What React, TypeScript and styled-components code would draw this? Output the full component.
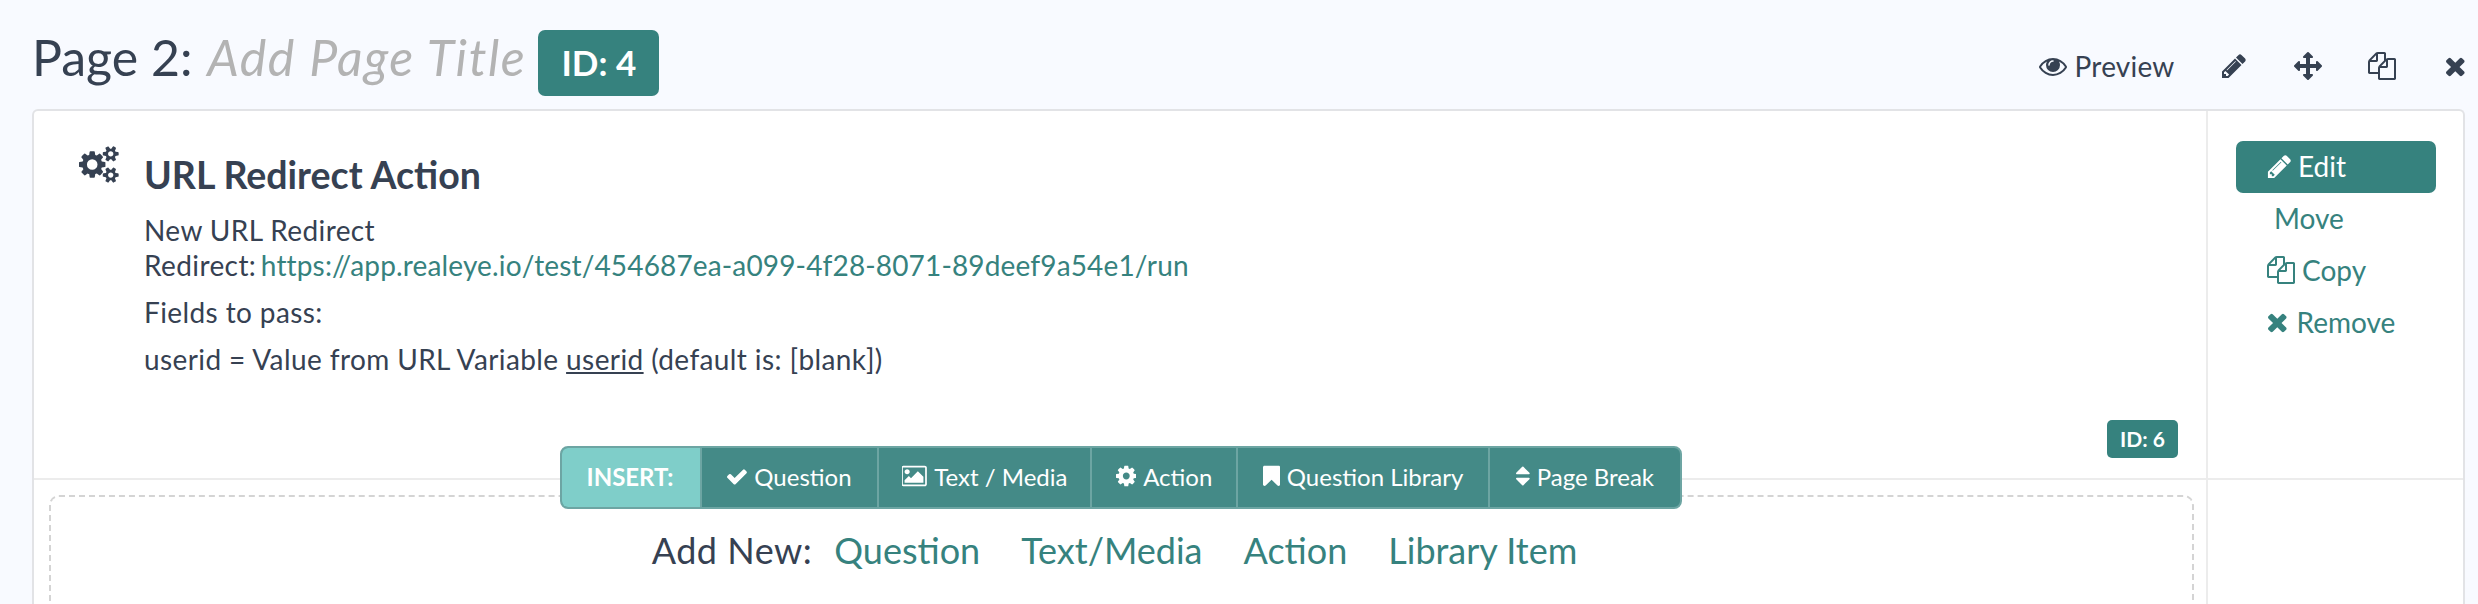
import React from "react";

import styled, { createGlobalStyle } from "styled-components";

const TEAL = "#36827e";
const INK = "#364152";

// Font Awesome 4 glyph shapes, all on the 1792 grid
const paths = {
  pencil:
    "M491 1536l91-91-235-235-91 91v107h128v128h107zm523-928q0-22-22-22-10 0-17 7l-542 542q-7 7-7 17 0 22 22 22 10 0 17-7l542-542q7-7 7-17zm-54-192l416 416-832 832h-416v-416zm683 96q0 53-37 90l-166 166-416-416 166-165q36-38 90-38 53 0 91 38l235 234q37 39 37 91z",
  files:
    "M1696 384q40 0 68 28t28 68v1216q0 40-28 68t-68 28h-960q-40 0-68-28t-28-68v-288h-544q-40 0-68-28t-28-68v-672q0-40 20-88t48-76l408-408q28-28 76-48t88-20h416q40 0 68 28t28 68v328q68-40 128-40h416zm-544 213l-299 299h299v-299zm-640-384l-299 299h299v-299zm196 647l316-316v-416h-384v416q0 40-28 68t-68 28h-416v640h512v-256q0-40 20-88t48-76zm956 804v-1152h-384v416q0 40-28 68t-68 28h-416v640h896z",
  times:
    "M1490 1322q0 40-28 68l-136 136q-28 28-68 28t-68-28l-294-294-294 294q-28 28-68 28t-68-28l-136-136q-28-28-28-68t28-68l294-294-294-294q-28-28-28-68t28-68l136-136q28-28 68-28t68 28l294 294 294-294q28-28 68-28t68 28l136 136q28 28 28 68t-28 68l-294 294 294 294q28 28 28 68z",
  eye: "M1664 960q-152-236-381-353 61 104 61 225 0 185-131.500 316.500t-316.500 131.500-316.500-131.500-131.500-316.500q0-121 61-225-229 117-381 353 133 205 333.500 326.500t434.500 121.500 434.500-121.500 333.500-326.500zm-720-384q0-20-14-34t-34-14q-125 0-214.500 89.500t-89.500 214.500q0 20 14 34t34 14 34-14 14-34q0-86 61-147t147-61q20 0 34-14t14-34zm848 384q0 34-20 69-140 230-376.500 368.500t-499.500 138.500-499.500-139-376.500-368q-20-35-20-69t20-69q140-229 376.500-368t499.500-139 499.500 139 376.500 368q20 35 20 69z",
  arrows:
    "M1792 896q0 26-19 45l-256 256q-19 19-45 19t-45-19-19-45v-128h-384v384h128q26 0 45 19t19 45-19 45l-256 256q-19 19-45 19t-45-19l-256-256q-19-19-19-45t19-45 45-19h128v-384h-384v128q0 26-19 45t-45 19-45-19l-256-256q-19-19-19-45t19-45l256-256q19-19 45-19t45 19 19 45v128h384v-384h-128q-26 0-45-19t-19-45 19-45l256-256q19-19 45-19t45 19l256 256q19 19 19 45t-19 45-45 19h-128v384h384v-128q0-26 19-45t45-19 45 19l256 256q19 19 19 45z",
  check:
    "M1671 566q0 40-28 68l-724 724-136 136q-28 28-68 28t-68-28l-136-136-362-362q-28-28-28-68t28-68l136-136q28-28 68-28t68 28l294 295 656-657q28-28 68-28t68 28l136 136q28 28 28 68z",
  picture:
    "M576 576q0 80-56 136t-136 56-136-56-56-136 56-136 136-56 136 56 56 136zm1024 384v448h-1408v-192l320-320 160 160 512-512zm96-704h-1600q-13 0-22.500 9.500t-9.500 22.500v1216q0 13 9.500 22.500t22.500 9.500h1600q13 0 22.500-9.500t9.500-22.500v-1216q0-13-9.500-22.500t-22.500-9.500zm160 32v1216q0 66-47 113t-113 47h-1600q-66 0-113-47t-47-113v-1216q0-66 47-113t113-47h1600q66 0 113 47t47 113z",
  cog: "M1152 896q0-106-75-181t-181-75-181 75-75 181 75 181 181 75 181-75 75-181zm512-109v222q0 12-8 23t-20 13l-185 28q-19 54-39 91 35 50 107 138 10 12 10 25t-9 23q-27 37-99 108t-94 71q-12 0-26-9l-138-108q-44 23-91 38-16 136-29 186-7 28-36 28h-222q-14 0-24.500-8.500t-11.500-21.500l-28-184q-49-16-90-37l-141 107q-10 9-25 9-14 0-25-11-126-114-165-168-7-10-7-23 0-12 8-23 15-21 51-66.500t54-70.500q-27-50-41-99l-183-27q-13-2-21-12.500t-8-23.500v-222q0-12 8-23t19-13l186-28q14-46 39-92-40-57-107-138-10-12-10-24 0-10 9-23 26-36 98.500-107.500t94.500-71.500q13 0 26 10l138 107q44-23 91-38 16-136 29-186 7-28 36-28h222q14 0 24.500 8.500t11.500 21.500l28 184q49 16 90 37l142-107q9-9 24-9 13 0 25 10 129 119 165 170 7 8 7 22 0 12-8 23-15 21-51 66.500t-54 70.500q26 50 41 98l183 28q13 2 21 12.500t8 23.500z",
  bookmark:
    "M1420 128q23 0 44 9 33 13 52.500 41t19.500 62v1289q0 34-19.500 62t-52.500 41q-19 8-44 8-48 0-83-32l-441-424-441 424q-36 33-83 33-23 0-44-9-33-13-52.500-41t-19.500-62v-1289q0-34 19.500-62t52.500-41q21-9 44-9h1048z",
  sort: "M1408 1088q0 26-19 45l-448 448q-19 19-45 19t-45-19l-448-448q-19-19-19-45t19-45 45-19h896q26 0 45 19t19 45zm0-384q0 26-19 45t-45 19h-896q-26 0-45-19t-19-45 19-45l448-448q19-19 45-19t45 19l448 448q19 19 19 45z",
  cogs: "M896 896q0-106-75-181t-181-75-181 75-75 181 75 181 181 75 181-75 75-181zm768 512q0-52-38-90t-90-38-90 38-38 90q0 53 37.500 90.500t90.500 37.500 90.500-37.500 37.500-90.500zm0-1024q0-52-38-90t-90-38-90 38-38 90q0 53 37.500 90.500t90.500 37.500 90.500-37.500 37.500-90.500zm-384 421v185q0 10-7 19.500t-16 10.500l-155 24q-11 35-32 76 34 48 90 115 7 11 7 20 0 12-7 19-23 30-82.500 89.500t-78.500 59.500q-11 0-21-7l-115-90q-37 19-77 31-11 108-23 155-7 24-30 24h-186q-11 0-20-7.500t-10-17.500l-23-153q-34-10-75-31l-118 89q-7 7-20 7-11 0-21-8-144-133-144-160 0-9 7-19 10-14 41-53t47-61q-23-44-35-82l-152-24q-10-1-17-9.500t-7-19.500v-185q0-10 7-19.500t16-10.500l155-24q11-35 32-76-34-48-90-115-7-11-7-20 0-12 7-20 22-30 82-89t79-59q11 0 21 7l115 90q34-18 77-32 11-108 23-154 7-24 30-24h186q11 0 20 7.500t10 17.500l23 153q34 10 75 31l118-89q8-7 20-7 11 0 21 8 144 133 144 160 0 8-7 19-12 16-42 54t-45 60q23 48 34 82l152 23q10 2 17 10.500t7 19.500zm640 533v140q0 16-149 31-12 27-30 52 51 113 51 138 0 4-4 7-122 71-124 71-8 0-46-47t-52-68q-20 2-30 2t-30-2q-14 21-52 68t-46 47q-2 0-124-71-4-3-4-7 0-25 51-138-18-25-30-52-149-15-149-31v-140q0-16 149-31 13-29 30-52-51-113-51-138 0-4 4-7 4-2 35-20t59-34 30-16q8 0 46 46.500t52 67.500q20-2 30-2t30 2q51-71 92-112l6-2q4 0 124 70 4 3 4 7 0 25-51 138 17 23 30 52 149 15 149 31zm0-1024v140q0 16-149 31-12 27-30 52 51 113 51 138 0 4-4 7-122 71-124 71-8 0-46-47t-52-68q-20 2-30 2t-30-2q-14 21-52 68t-46 47q-2 0-124-71-4-3-4-7 0-25 51-138-18-25-30-52-149-15-149-31v-140q0-16 149-31 13-29 30-52-51-113-51-138 0-4 4-7 4-2 35-20t59-34 30-16q8 0 46 46.500t52 67.500q20-2 30-2t30 2q51-71 92-112l6-2q4 0 124 70 4 3 4 7 0 25-51 138 17 23 30 52 149 15 149 31z",
};

type IconName = keyof typeof paths;

// x offset and width of each glyph's own box, where it isn't a plain 1792 square
const boxes: Partial<Record<IconName, [number, number]>> = {
  picture: [0, 1920],
  cogs: [0, 1920],
  times: [302, 1188],
  check: [120, 1552],
  bookmark: [256, 1280],
  sort: [384, 1024],
  cog: [128, 1536],
};

const Icon = ({ name, size }: { name: IconName; size: number }) => {
  const [x, w] = boxes[name] ?? [0, 1792];
  return (
    <Glyph
      viewBox={`${x} 0 ${w} 1792`}
      width={(size * w) / 1792}
      height={size}
      fill="currentColor"
    >
      <path d={paths[name]} />
    </Glyph>
  );
};

export default function App() {
  return (
    <>
      <GlobalStyle />
      <Root>
        <Header>
          <Title>
            Page 2: <Placeholder>Add Page Title</Placeholder>
            <PageBadge>ID: 4</PageBadge>
          </Title>
          <PageTools>
            <PreviewLink>
              <Icon name="eye" size={28} /> Preview
            </PreviewLink>
            <ToolIcon>
              <Icon name="pencil" size={28} />
            </ToolIcon>
            <ToolIcon>
              <Icon name="arrows" size={28} />
            </ToolIcon>
            <ToolIcon>
              <Icon name="files" size={28} />
            </ToolIcon>
            <CloseIcon>
              <Icon name="times" size={28} />
            </CloseIcon>
          </PageTools>
        </Header>

        <Card>
          <ActionCell>
            <GearSlot>
              <Icon name="cogs" size={37} />
            </GearSlot>
            <ActionBody>
              <ActionTitle>URL Redirect Action</ActionTitle>
              <BodyText>
                New URL Redirect
                <br />
                Redirect:{" "}
                <TealLink>
                  https://app.realeye.io/test/454687ea-a099-4f28-8071-89deef9a54e1/run
                </TealLink>
              </BodyText>
              <BodyText>Fields to pass:</BodyText>
              <BodyText>
                userid = Value from URL Variable <u>userid</u> (default is: [blank])
              </BodyText>
            </ActionBody>
            <ItemBadge>ID: 6</ItemBadge>
          </ActionCell>

          <SideCell>
            <EditButton>
              <Icon name="pencil" size={27} /> Edit
            </EditButton>
            <SideLink $indent={38} $gap={8}>
              Move
            </SideLink>
            <SideLink $indent={31} $gap={7}>
              <Icon name="files" size={28} /> Copy
            </SideLink>
            <SideLink $indent={32} $gap={10}>
              <Icon name="times" size={28} /> Remove
            </SideLink>
          </SideCell>

          <AddCell>
            <DropZone>
              <AddLabel>Add New:</AddLabel>
              <AddLink>Question</AddLink>
              <AddLink>Text/Media</AddLink>
              <AddLink>Action</AddLink>
              <AddLink>Library Item</AddLink>
            </DropZone>
          </AddCell>
          <EmptySide />

          <InsertBar>
            <InsertLabel>INSERT:</InsertLabel>
            <InsertItem $w={177}>
              <Icon name="check" size={23} /> Question
            </InsertItem>
            <InsertItem $w={213}>
              <Icon name="picture" size={24} /> Text / Media
            </InsertItem>
            <InsertItem $w={146}>
              <Icon name="cog" size={24} /> Action
            </InsertItem>
            <InsertItem $w={252}>
              <Icon name="bookmark" size={24} /> Question Library
            </InsertItem>
            <InsertItem $w={192}>
              <Icon name="sort" size={24} /> Page Break
            </InsertItem>
          </InsertBar>
        </Card>
      </Root>
    </>
  );
}

const GlobalStyle = createGlobalStyle`
  html, body {
    margin: 0;
    background: #f8faff;
  }
  body {
    font-family: "Lato", "Noto Sans", sans-serif;
    color: ${INK};
  }
`;

const Glyph = styled.svg`
  display: inline-block;
  flex: none;
`;

const Root = styled.div`
  width: 2478px;
  height: 604px;
  box-sizing: border-box;
  padding: 0 13px 0 32px;
  overflow: hidden;
`;

const Header = styled.div`
  height: 109px;
  display: flex;
  justify-content: space-between;
`;

const Title = styled.h1`
  margin: 30px 0 0;
  height: 66px;
  display: flex;
  align-items: flex-start;
  gap: 12px;
  font-size: 50px;
  line-height: 54px;
  font-weight: 400;
  white-space: pre;
`;

const Placeholder = styled.em`
  color: #b3b3b3;
  margin-left: -10px;
  letter-spacing: 1.6px;
`;

const PageBadge = styled.span`
  height: 66px;
  width: 121px;
  box-sizing: border-box;
  padding-bottom: 3px;
  display: flex;
  align-items: center;
  justify-content: center;
  background: ${TEAL};
  color: #fff;
  border-radius: 7px;
  font-size: 35px;
  font-weight: 700;
`;

const PageTools = styled.div`
  display: flex;
  align-items: center;
  height: 28px;
  margin-top: 52px;
  gap: 46px;
`;

const PreviewLink = styled.span`
  display: flex;
  align-items: center;
  gap: 8px;
  font-size: 28px;
  letter-spacing: 0.2px;
  margin-right: 0;
`;

const ToolIcon = styled.span`
  display: flex;
`;

const CloseIcon = styled(ToolIcon)`
  margin-left: 4px;
`;

const Card = styled.div`
  position: relative;
  height: 495px;
  box-sizing: border-box;
  background: #fff;
  border: 2px solid #e2e3e6;
  border-bottom: 0;
  border-radius: 6px 6px 0 0;
  display: grid;
  grid-template-columns: 1fr 255px;
  grid-template-rows: 369px 1fr;
`;

const ActionCell = styled.div`
  position: relative;
  display: flex;
  border-right: 2px solid #ececec;
  border-bottom: 2px solid #ececec;
`;

const GearSlot = styled.div`
  width: 110px;
  box-sizing: border-box;
  padding: 35px 0 0 45px;
`;

const ActionBody = styled.div`
  padding-top: 43px;
`;

const ActionTitle = styled.h3`
  margin: 0 0 17px;
  font-size: 37.5px;
  line-height: 42px;
  font-weight: 700;
`;

const BodyText = styled.p`
  margin: 0 0 12px;
  font-size: 28px;
  line-height: 35px;
  letter-spacing: 0.4px;
`;

const TealLink = styled.span`
  margin-left: -3px;
  color: ${TEAL};
  letter-spacing: 0.15px;
`;

const ItemBadge = styled.span`
  position: absolute;
  right: 28px;
  bottom: 20px;
  width: 71px;
  height: 38px;
  box-sizing: border-box;
  padding-bottom: 2px;
  display: flex;
  align-items: center;
  justify-content: center;
  background: ${TEAL};
  color: #fff;
  border-radius: 5px;
  font-size: 21px;
  font-weight: 700;
`;

const SideCell = styled.div`
  display: flex;
  flex-direction: column;
  align-items: flex-start;
  padding: 30px 0 0 28px;
  border-bottom: 2px solid #ececec;
`;

const EditButton = styled.div`
  width: 200px;
  height: 52px;
  box-sizing: border-box;
  padding: 0 0 2px 30px;
  display: flex;
  align-items: center;
  gap: 5px;
  background: ${TEAL};
  color: #fff;
  border-radius: 7px;
  font-size: 28px;
`;

const SideLink = styled.div<{ $indent: number; $gap: number }>`
  height: 52px;
  box-sizing: border-box;
  padding-bottom: 2px;
  display: flex;
  align-items: center;
  gap: ${(p) => p.$gap}px;
  padding-left: ${(p) => p.$indent}px;
  color: ${TEAL};
  font-size: 28px;
`;

const AddCell = styled.div`
  padding: 15px 12px 0 15px;
  border-right: 2px solid #ececec;
`;

const DropZone = styled.div`
  height: 200px;
  box-sizing: border-box;
  padding: 31px 14px 0 0;
  border: 2px dashed #d4d4d4;
  border-radius: 10px;
  display: flex;
  justify-content: center;
  align-items: flex-start;
  gap: 41px;
  font-size: 36px;
  line-height: 44px;
`;

const AddLabel = styled.span`
  margin-right: -19px;
  letter-spacing: 0.5px;
`;

const AddLink = styled.span`
  color: ${TEAL};
`;

const EmptySide = styled.div``;

const InsertBar = styled.div`
  position: absolute;
  left: 526px;
  top: 335px;
  height: 63px;
  box-sizing: border-box;
  display: flex;
  background: #448a87;
  border: 2px solid #6da5a3;
  border-radius: 8px;
  color: #fff;
  font-size: 24px;
  overflow: hidden;
`;

const InsertLabel = styled.div`
  width: 140px;
  box-sizing: border-box;
  margin: -2px 0 -2px -2px;
  padding-bottom: 2px;
  display: flex;
  align-items: center;
  justify-content: center;
  background: #7fcec9;
  font-weight: 700;
`;

const InsertItem = styled.div<{ $w: number }>`
  width: ${(p) => p.$w}px;
  box-sizing: border-box;
  padding-bottom: 3px;
  display: flex;
  align-items: center;
  justify-content: center;
  gap: 7px;
  border-left: 2px solid #6da5a3;
`;
